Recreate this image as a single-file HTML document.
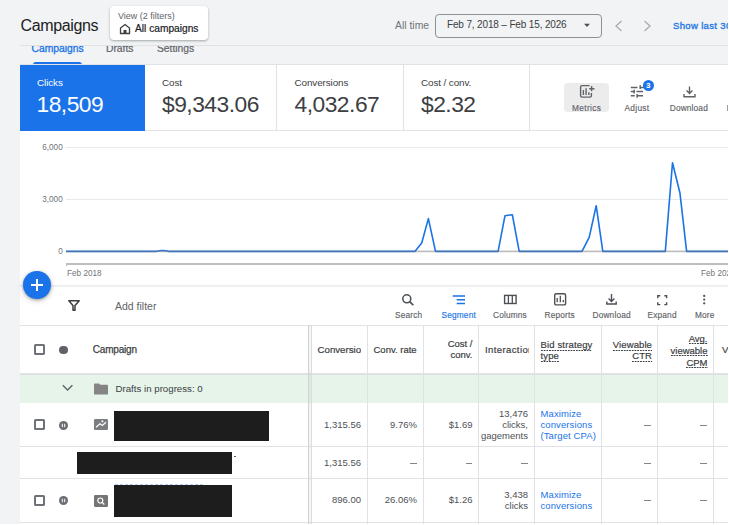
<!DOCTYPE html>
<html><head><meta charset="utf-8">
<style>
*{margin:0;padding:0;box-sizing:border-box}
html,body{width:729px;height:525px;overflow:hidden;background:#f1f3f4;font-family:"Liberation Sans",sans-serif;color:#3c4043}
.a{position:absolute}
.t{position:absolute;white-space:nowrap;line-height:1}
.hl{position:absolute;height:1px;background:#e0e2e5}
.vl{position:absolute;width:1px;background:#e0e2e5}
.u{background:linear-gradient(to right,#3c4043 62%,transparent 0) left bottom/2.7px 1px repeat-x;padding-bottom:0.6px}
#panel{position:absolute;left:20px;top:65px;width:708px;height:460px;background:#fff}
</style></head><body>

<!-- tabs (under header) -->
<div class="t" style="left:31.5px;top:43.6px;font-size:10.3px;-webkit-text-stroke:0.3px #1a73e8;color:#1a73e8">Campaigns</div>
<div class="t" style="left:106px;top:43.6px;font-size:10.3px;-webkit-text-stroke:0.2px #5f6368;color:#5f6368">Drafts</div>
<div class="t" style="left:157px;top:43.6px;font-size:10.3px;-webkit-text-stroke:0.2px #5f6368;color:#5f6368">Settings</div>
<div class="a" style="left:33px;top:62px;width:49px;height:3px;background:#1a73e8;border-radius:3px 3px 0 0"></div>

<!-- header -->
<div class="a" style="left:0;top:0;width:729px;height:45px;background:#f1f3f4"></div>
<div class="hl" style="left:20px;top:45px;width:708px"></div>
<div class="t" style="left:20.6px;top:17.6px;font-size:16px;letter-spacing:-0.38px;color:#202124">Campaigns</div>
<div class="a" style="left:109.5px;top:6px;width:98px;height:34px;background:#fff;border-radius:4px;box-shadow:0 1px 2px rgba(60,64,67,.3),0 1px 3px rgba(60,64,67,.15)"></div>
<div class="t" style="left:118px;top:11.5px;font-size:9px;color:#5f6368">View (2 filters)</div>
<svg class="a" style="left:119px;top:23px" width="12" height="12" viewBox="0 0 12 12"><path d="M6 1.5 L10.5 5 V10.5 H1.5 V5 Z" fill="none" stroke="#3c4043" stroke-width="1.3"/><rect x="4.5" y="7" width="3" height="3.5" fill="#3c4043"/></svg>
<div class="t" style="left:135px;top:24px;font-size:10.2px;-webkit-text-stroke:0.2px #202124;color:#202124">All campaigns</div>

<div class="t" style="left:395px;top:20.5px;font-size:10.4px;color:#70757a">All time</div>
<div class="a" style="left:435px;top:13.5px;width:167px;height:24px;border:1px solid #8c9196;border-radius:4px"></div>
<div class="t" style="left:447px;top:20.2px;font-size:10px;letter-spacing:-0.15px;color:#3c4043">Feb 7, 2018 – Feb 15, 2026</div>
<svg class="a" style="left:583px;top:23px" width="8" height="5" viewBox="0 0 8 5"><path d="M1 0.8 H7 L4 4 Z" fill="#4d5156"/></svg>
<svg class="a" style="left:613px;top:20px" width="10" height="12" viewBox="0 0 10 12"><path d="M8.5 1 L3 6 L8.5 11" fill="none" stroke="#a8acb1" stroke-width="1.3"/></svg>
<svg class="a" style="left:643px;top:20px" width="10" height="12" viewBox="0 0 10 12"><path d="M1.5 1 L7 6 L1.5 11" fill="none" stroke="#a8acb1" stroke-width="1.3"/></svg>
<div class="t" style="left:673px;top:21.2px;font-size:9.6px;letter-spacing:0.3px;-webkit-text-stroke:0.3px #1a73e8;color:#1a73e8">Show last 30</div>

<!-- white panel -->
<div id="panel"></div>
<div class="hl" style="left:20px;top:64px;width:708px"></div>
<div class="a" style="left:20px;top:65.3px;width:125px;height:65.4px;background:#1a73e8"></div>
<div class="hl" style="left:145px;top:130px;width:583px"></div>
<div class="vl" style="left:276px;top:65px;height:65px"></div>
<div class="vl" style="left:403px;top:65px;height:65px"></div>
<div class="vl" style="left:529px;top:65px;height:65px"></div>

<div class="t" style="left:37px;top:78.2px;font-size:9.9px;letter-spacing:-0.1px;color:#fff">Clicks</div>
<div class="t" style="left:36.5px;top:93px;font-size:22.8px;letter-spacing:-0.5px;color:#fff">18,509</div>
<div class="t" style="left:162px;top:78.2px;font-size:9.9px;letter-spacing:-0.1px;color:#3c4043">Cost</div>
<div class="t" style="left:162px;top:93px;font-size:22.8px;letter-spacing:-0.5px;color:#3c4043">$9,343.06</div>
<div class="t" style="left:294.5px;top:78.2px;font-size:9.9px;letter-spacing:-0.1px;color:#3c4043">Conversions</div>
<div class="t" style="left:294.5px;top:93px;font-size:22.8px;letter-spacing:-0.5px;color:#3c4043">4,032.67</div>
<div class="t" style="left:421px;top:78.2px;font-size:9.9px;letter-spacing:-0.1px;color:#3c4043">Cost / conv.</div>
<div class="t" style="left:421px;top:93px;font-size:22.8px;letter-spacing:-0.5px;color:#3c4043">$2.32</div>

<div class="a" style="left:564px;top:83px;width:45px;height:29px;background:#ececed;border-radius:4px"></div>
<div class="t" style="left:572px;top:103.5px;font-size:8.3px;letter-spacing:0.35px;-webkit-text-stroke:0.15px #5f6368;color:#5f6368">Metrics</div>
<div class="t" style="left:624.5px;top:103.5px;font-size:8.3px;letter-spacing:0.3px;-webkit-text-stroke:0.15px #5f6368;color:#5f6368">Adjust</div>
<div class="t" style="left:669.8px;top:103.5px;font-size:8.3px;letter-spacing:0.15px;-webkit-text-stroke:0.15px #5f6368;color:#5f6368">Download</div>


<svg class="a" style="left:576px;top:82px" width="22" height="18" viewBox="0 0 22 18"><path d="M13.5 3.6 H6.1 Q4.6 3.6 4.6 5.1 V13.6 Q4.6 15.1 6.1 15.1 H13.9 Q15.4 15.1 15.4 13.6 V11" fill="none" stroke="#5f6368" stroke-width="1.4"/><path d="M15.6 4.1 V9.3 M13.2 6.7 H18.5" stroke="#5f6368" stroke-width="1.4"/><path d="M7.4 8 V13 M10.1 6.3 V13 M12.85 10.3 V13" stroke="#5f6368" stroke-width="1.4"/></svg>
<svg class="a" style="left:626px;top:78px" width="20" height="22" viewBox="0 0 20 22"><path d="M4.8 9.4 H11.5 M14.2 9.4 H18 M4.8 13.4 H8.4 M10.5 13.4 H17 M4.8 17.8 H8.8 M11 17.8 H17" stroke="#5f6368" stroke-width="1.5"/><path d="M14.2 7.3 V11.1 M8.2 11.7 V15.5 M11.1 15.9 V19.7" stroke="#5f6368" stroke-width="1.5"/></svg>
<div class="a" style="left:642.7px;top:80.1px;width:11.3px;height:11.3px;border-radius:50%;background:#1a73e8"></div>
<div class="t" style="left:646px;top:82.2px;font-size:8px;font-weight:bold;color:#fff">3</div>
<svg class="a" style="left:683px;top:85.5px" width="13" height="12" viewBox="0 0 13 12"><path d="M6.5 0.5 V7.5 M3.6 4.6 L6.5 7.5 L9.4 4.6 M1 8 V10.8 H12 V8" fill="none" stroke="#5f6368" stroke-width="1.4"/></svg>
<div class="a" style="left:727px;top:105px;width:1px;height:5.5px;background:#9aa0a6"></div>

<!-- chart -->
<div class="t" style="right:666.3px;top:143.8px;font-size:8.2px;color:#70757a">6,000</div>
<div class="t" style="right:666.3px;top:195.8px;font-size:8.2px;color:#70757a">3,000</div>
<div class="t" style="right:666.3px;top:247.8px;font-size:8.2px;color:#70757a">0</div>
<div class="hl" style="left:66px;top:147px;width:662px;background:#e8eaed"></div>
<div class="hl" style="left:66px;top:199px;width:662px;background:#e8eaed"></div>
<div class="a" style="left:66px;top:263px;width:662px;height:2px;background:#bdbdbd"></div><div class="a" style="left:66px;top:263px;width:1px;height:3px;background:#bdbdbd"></div>
<div class="t" style="left:67px;top:270px;font-size:8.2px;color:#70757a">Feb 2018</div>
<div class="t" style="left:701px;top:270px;font-size:8.2px;color:#70757a">Feb 2026</div>

<!-- toolbar -->
<div class="a" style="left:20px;top:285px;width:708px;height:2px;background:#eef0f2"></div>
<div class="t" style="left:115px;top:301px;font-size:10.5px;color:#5f6368">Add filter</div>

<!-- table header -->
<div class="hl" style="left:20px;top:325px;width:708px"></div>
<div class="a" style="left:20px;top:373px;width:708px;height:1.5px;background:#dfe1e4"></div>


<!-- chart lines -->
<svg class="a" style="left:0;top:0" width="729" height="525" viewBox="0 0 729 525">
<path d="M66 251.4 H156 Q162.5 249.5 169 251.4 H414.9 L421.7 243 L428.4 218.6 L435.5 251.4 H498.1 L505 215.7 L512.3 214.7 L519.2 251.4 H582 L589.2 237.4 L596.2 205.7 L602.8 251.4 H665.3 L672.5 162.7 L680 193.3 L686.6 251.4 H728" fill="none" stroke="#1a73e8" stroke-width="1.6" stroke-linejoin="round"/>
<rect x="66" y="250.6" width="662" height="1.6" fill="rgba(120,120,120,0.5)"/>
</svg>

<!-- FAB -->
<div class="a" style="left:23px;top:271px;width:28px;height:28px;border-radius:50%;background:#1a73e8;box-shadow:0 1px 3px rgba(0,0,0,.3),0 2px 6px rgba(0,0,0,.15)"></div>
<div class="a" style="left:31px;top:284.2px;width:12px;height:1.6px;background:#fff"></div>
<div class="a" style="left:36.2px;top:279px;width:1.6px;height:12px;background:#fff"></div>

<!-- filter icon -->
<svg class="a" style="left:67.5px;top:300px" width="12" height="11" viewBox="0 0 12 11"><path d="M0.8 0.8 H11.2 L7 5.5 V10.2 H5 V5.5 Z" fill="none" stroke="#3c4043" stroke-width="1.5" stroke-linejoin="round"/></svg>

<!-- toolbar icons -->
<svg class="a" style="left:401px;top:293px" width="14" height="13" viewBox="0 0 14 13"><circle cx="5.8" cy="5.8" r="4" fill="none" stroke="#4d5156" stroke-width="1.6"/><path d="M8.7 8.7 L12.3 12.2" stroke="#4d5156" stroke-width="1.7"/></svg>
<div class="t" style="left:395px;top:311.3px;font-size:8.3px;letter-spacing:0.17px;-webkit-text-stroke:0.15px currentColor;color:#5f6368">Search</div>
<svg class="a" style="left:452px;top:294px" width="14" height="11" viewBox="0 0 14 11"><path d="M0.7 2 H13 M4.7 5.7 H13 M4.7 9.4 H13" stroke="#1a73e8" stroke-width="1.5"/></svg>
<div class="t" style="left:441.5px;top:311.3px;font-size:8.3px;letter-spacing:0.17px;-webkit-text-stroke:0.15px currentColor;color:#1a73e8">Segment</div>
<svg class="a" style="left:503px;top:294px" width="15" height="12" viewBox="0 0 15 12"><rect x="1.6" y="1.4" width="11.5" height="8.1" fill="none" stroke="#4d5156" stroke-width="1.4"/><path d="M5.4 1.4 V9.5 M9.3 1.4 V9.5" stroke="#4d5156" stroke-width="1.3"/></svg>
<div class="t" style="left:493px;top:311.3px;font-size:8.3px;letter-spacing:0.17px;-webkit-text-stroke:0.15px currentColor;color:#5f6368">Columns</div>
<svg class="a" style="left:553px;top:292px" width="15" height="15" viewBox="0 0 15 15"><rect x="1.7" y="1.7" width="10.9" height="11.2" rx="1.5" fill="none" stroke="#4d5156" stroke-width="1.4"/><path d="M4.2 10.3 V5.9 M7.3 10.3 V3.7 M10.3 10.3 V7.9" stroke="#4d5156" stroke-width="1.3"/></svg>
<div class="t" style="left:544.5px;top:311.3px;font-size:8.3px;letter-spacing:0.17px;-webkit-text-stroke:0.15px currentColor;color:#5f6368">Reports</div>
<svg class="a" style="left:605px;top:293px" width="13" height="13" viewBox="0 0 13 13"><path d="M6.5 1 V8.3 M3.6 5.5 L6.5 8.4 L9.4 5.5 M1.8 8.6 V11 H11.2 V8.6" fill="none" stroke="#4d5156" stroke-width="1.4"/></svg>
<div class="t" style="left:592.5px;top:311.3px;font-size:8.3px;letter-spacing:0.17px;-webkit-text-stroke:0.15px currentColor;color:#5f6368">Download</div>
<svg class="a" style="left:657px;top:294.5px" width="11" height="11" viewBox="0 0 11 11"><path d="M0.8 3.3 V0.8 H3.3 M7.3 0.8 H9.6 V3.3 M9.6 7.3 V9.6 H7.3 M3.3 9.6 H0.8 V7.3" fill="none" stroke="#4d5156" stroke-width="1.4"/></svg>
<div class="t" style="left:647.5px;top:311.3px;font-size:8.3px;letter-spacing:0.17px;-webkit-text-stroke:0.15px currentColor;color:#5f6368">Expand</div>
<svg class="a" style="left:701px;top:293px" width="6" height="13" viewBox="0 0 6 13"><circle cx="3.2" cy="2.9" r="1.15" fill="#4d5156"/><circle cx="3.2" cy="6.6" r="1.15" fill="#4d5156"/><circle cx="3.2" cy="10.3" r="1.15" fill="#4d5156"/></svg>
<div class="t" style="left:695px;top:311.3px;font-size:8.3px;letter-spacing:0.17px;-webkit-text-stroke:0.15px currentColor;color:#5f6368">More</div>

<!-- table header -->
<div class="a" style="left:34.2px;top:344px;width:11.2px;height:11.2px;border:2px solid #6f7377;border-radius:1.5px"></div>
<div class="a" style="left:59.3px;top:345.5px;width:8.5px;height:8.5px;border-radius:50%;background:#5f6368"></div>
<div class="t" style="left:92.8px;top:344.6px;font-size:10px;letter-spacing:-0.2px;-webkit-text-stroke:0.25px #3c4043;color:#3c4043">Campaign</div>

<!-- green row -->
<div class="a" style="left:20px;top:374.5px;width:708px;height:28.8px;background:#e6f4ea"></div>
<svg class="a" style="left:62px;top:384px" width="12" height="8" viewBox="0 0 12 8"><path d="M0.8 1.3 L5.6 6.1 L10.4 1.3" fill="none" stroke="#5f6368" stroke-width="1.4"/></svg>
<svg class="a" style="left:94px;top:383px" width="14" height="12" viewBox="0 0 14 12"><path d="M0 1.2 Q0 0.4 0.8 0.4 H5 L6.3 1.8 H13.2 Q14 1.8 14 2.6 V11 Q14 11.6 13.2 11.6 H0.8 Q0 11.6 0 11 Z" fill="#858585"/></svg>
<div class="t" style="left:115.5px;top:384px;font-size:9.7px;color:#3c4043">Drafts in progress: 0</div>

<!-- row borders -->
<div class="hl" style="left:20px;top:446px;width:708px"></div>
<div class="hl" style="left:20px;top:478px;width:708px"></div>
<div class="hl" style="left:20px;top:522px;width:708px"></div>

<!-- column dividers -->
<div class="vl" style="left:308px;top:325px;height:200px;background:#d0d3d6"></div>
<div class="a" style="left:309px;top:325px;width:2px;height:200px;background:rgba(60,64,67,.05)"></div>
<div class="vl" style="left:311px;top:325px;height:200px;background:#dadce0"></div>
<div class="vl" style="left:367px;top:325px;height:200px"></div>
<div class="vl" style="left:423px;top:325px;height:200px"></div>
<div class="vl" style="left:478px;top:325px;height:200px"></div>
<div class="vl" style="left:534px;top:325px;height:200px"></div>
<div class="vl" style="left:601px;top:325px;height:200px"></div>
<div class="vl" style="left:657px;top:325px;height:200px"></div>
<div class="vl" style="left:713px;top:325px;height:200px"></div>

<!-- header cells -->
<div class="a" style="left:312px;top:325px;width:49.3px;height:48px;overflow:hidden">
  <div class="t" style="left:5.5px;top:20px;font-size:9.7px;color:#3c4043;-webkit-text-stroke:0.2px #3c4043">Conversions</div>
</div>
<div class="t" style="left:373.5px;top:345px;font-size:9.5px;color:#3c4043;-webkit-text-stroke:0.2px #3c4043">Conv. rate</div>
<div class="a" style="right:256.5px;top:338px;font-size:9.5px;line-height:11px;text-align:right;color:#3c4043;-webkit-text-stroke:0.2px #3c4043;white-space:nowrap">Cost /<br>conv.</div>
<div class="a" style="left:479px;top:325px;width:49.6px;height:48px;overflow:hidden">
  <div class="t" style="left:6px;top:20px;font-size:9.5px;letter-spacing:0.4px;color:#3c4043;-webkit-text-stroke:0.2px #3c4043">Interactions</div>
</div>
<div class="a" style="left:540.5px;top:339px;font-size:9.5px;line-height:11px;letter-spacing:0.15px;color:#3c4043;-webkit-text-stroke:0.2px #3c4043;white-space:nowrap"><span class="u">Bid strategy</span><br><span class="u">type</span></div>
<div class="a" style="right:77px;top:339px;font-size:9.5px;line-height:11px;letter-spacing:0.1px;text-align:right;color:#3c4043;-webkit-text-stroke:0.2px #3c4043;white-space:nowrap"><span class="u">Viewable</span><br><span class="u">CTR</span></div>
<div class="a" style="right:21.5px;top:332.5px;font-size:9.5px;line-height:12px;text-align:right;color:#3c4043;-webkit-text-stroke:0.2px #3c4043;white-space:nowrap"><span class="u">Avg.</span><br><span class="u">viewable</span><br><span class="u">CPM</span></div>
<div class="t" style="left:722px;top:345px;font-size:9.5px;color:#3c4043;-webkit-text-stroke:0.2px #3c4043">V</div>

<!-- row 1 -->
<div class="a" style="left:34.2px;top:419px;width:11.2px;height:11.2px;border:2px solid #6f7377;border-radius:1.5px"></div>
<svg class="a" style="left:59px;top:421px" width="9" height="9" viewBox="0 0 9 9"><circle cx="4.5" cy="4.5" r="4.5" fill="#6b6f73"/><path d="M3.3 2.8 V6.2 M5.7 2.8 V6.2" stroke="#fff" stroke-width="1"/></svg>
<svg class="a" style="left:94px;top:419.3px" width="14" height="11" viewBox="0 0 14 11"><rect width="14" height="11" rx="1.3" fill="#7a7e82"/><path d="M2 8.2 L6 4.8 L8.3 6.5 L12 3.2" fill="none" stroke="#fff" stroke-width="1.2"/><path d="M8.4 1.2 V3.4 M7.3 2.3 H9.5" stroke="#fff" stroke-width="0.8"/></svg>
<div class="a" style="left:114px;top:411px;width:154.5px;height:30px;background:#1d1d1d"></div>
<div class="t" style="right:368px;top:420px;font-size:9.5px;color:#4d5156">1,315.56</div>
<div class="t" style="right:312px;top:420px;font-size:9.5px;color:#4d5156">9.76%</div>
<div class="t" style="right:256.5px;top:420px;font-size:9.5px;color:#4d5156">$1.69</div>
<div class="a" style="right:201px;top:408px;font-size:9.5px;line-height:11.2px;text-align:right;color:#4d5156;white-space:nowrap">13,476<br>clicks,<br>gagements</div>
<div class="a" style="left:540.5px;top:407.5px;font-size:9.5px;line-height:11.4px;letter-spacing:0.1px;color:#1a73e8;white-space:nowrap">Maximize<br>conversions<br>(Target CPA)</div>
<div class="a" style="right:78.5px;top:424.5px;width:6.5px;height:1px;background:#80868b"></div>
<div class="a" style="right:22.5px;top:424.5px;width:6.5px;height:1px;background:#80868b"></div>

<!-- row 2 -->
<div class="a" style="left:77px;top:452px;width:154.5px;height:22px;background:#1d1d1d"></div>
<div class="a" style="left:234px;top:456px;width:2px;height:1px;background:#5f6368"></div>
<div class="t" style="right:368px;top:458px;font-size:9.5px;color:#4d5156">1,315.56</div>
<div class="a" style="right:312.5px;top:462.5px;width:6.5px;height:1px;background:#80868b"></div>
<div class="a" style="right:257.0px;top:462.5px;width:6.5px;height:1px;background:#80868b"></div>
<div class="a" style="right:201.5px;top:462.5px;width:6.5px;height:1px;background:#80868b"></div>
<div class="a" style="right:78.5px;top:462.5px;width:6.5px;height:1px;background:#80868b"></div>
<div class="a" style="right:22.5px;top:462.5px;width:6.5px;height:1px;background:#80868b"></div>

<!-- row 3 -->
<div class="a" style="left:34.2px;top:494.5px;width:11.2px;height:11.2px;border:2px solid #6f7377;border-radius:1.5px"></div>
<svg class="a" style="left:59px;top:496px" width="9" height="9" viewBox="0 0 9 9"><circle cx="4.5" cy="4.5" r="4.5" fill="#6b6f73"/><path d="M3.3 2.8 V6.2 M5.7 2.8 V6.2" stroke="#fff" stroke-width="1"/></svg>
<svg class="a" style="left:94px;top:494.5px" width="14" height="12" viewBox="0 0 14 12"><rect width="14" height="12" rx="1.3" fill="#757575"/><circle cx="6.3" cy="5.5" r="2.5" fill="none" stroke="#fff" stroke-width="1.2"/><path d="M8.2 7.4 L10.3 9.5" stroke="#fff" stroke-width="1.3"/></svg>
<div class="a" style="left:114px;top:485px;width:117.5px;height:31.5px;background:#1d1d1d"></div>
<div class="t" style="right:368px;top:495px;font-size:9.5px;color:#4d5156">896.00</div>
<div class="t" style="right:312px;top:495px;font-size:9.5px;color:#4d5156">26.06%</div>
<div class="t" style="right:256.5px;top:495px;font-size:9.5px;color:#4d5156">$1.26</div>
<div class="a" style="right:201px;top:488.5px;font-size:9.5px;line-height:11.7px;text-align:right;color:#4d5156;white-space:nowrap">3,438<br>clicks</div>
<div class="a" style="left:540.5px;top:488.5px;font-size:9.5px;line-height:11.4px;letter-spacing:0.1px;color:#1a73e8;white-space:nowrap">Maximize<br>conversions</div>
<div class="a" style="right:78.5px;top:499.5px;width:6.5px;height:1px;background:#80868b"></div>
<div class="a" style="right:22.5px;top:499.5px;width:6.5px;height:1px;background:#80868b"></div>
<div class="a" style="left:728px;top:0;width:1px;height:525px;background:#fff"></div>
<div class="a" style="left:0;top:524px;width:729px;height:1px;background:#fff"></div>
<div class="a" style="left:115px;top:484px;width:88px;height:1px;background:linear-gradient(to right,rgba(26,115,232,.35) 60%,transparent 0) 0 0/5px 1px repeat-x"></div>
</body></html>
